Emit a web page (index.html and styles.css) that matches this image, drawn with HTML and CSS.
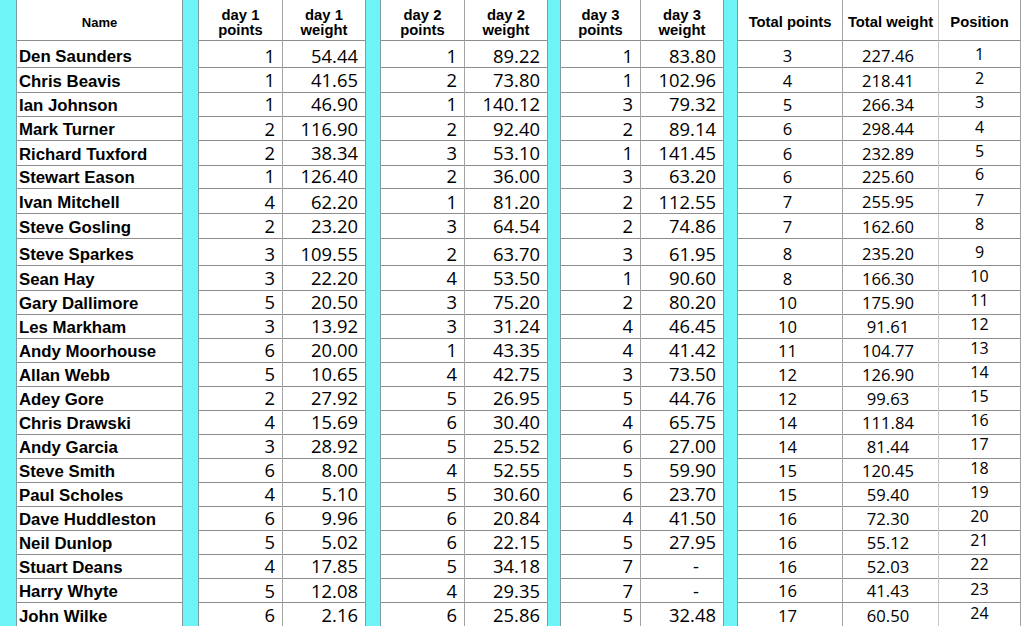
FILE: index.html
```html
<!DOCTYPE html>
<html lang="en">
<head>
<meta charset="utf-8">
<title>Results</title>
<link rel="stylesheet" href="styles.css">
</head>
<body>
<div class="sheet">
  <div class="row head">
    <div class="cy c0"></div>
    <div class="hd hname">Name</div>
    <div class="cy"></div>
    <div class="hd vr">day 1<br>points</div>
    <div class="hd">day 1<br>weight</div>
    <div class="cy"></div>
    <div class="hd vr">day 2<br>points</div>
    <div class="hd">day 2<br>weight</div>
    <div class="cy"></div>
    <div class="hd vr">day 3<br>points</div>
    <div class="hd">day 3<br>weight</div>
    <div class="cy"></div>
    <div class="hd vr">Total points</div>
    <div class="hd vr lt">Total weight</div>
    <div class="hd vr">Position</div>
  </div>

  <div class="row h27"><div class="cy c0"></div><div class="nm">Den Saunders</div><div class="cy"></div><div class="num vr">1</div><div class="num">54.44</div><div class="cy"></div><div class="num vr">1</div><div class="num">89.22</div><div class="cy"></div><div class="num vr">1</div><div class="num">83.80</div><div class="cy"></div><div class="tot vr">3</div><div class="tot vr lt">227.46</div><div class="pos vr">1</div></div>
  <div class="row"><div class="cy c0"></div><div class="nm">Chris Beavis</div><div class="cy"></div><div class="num vr">1</div><div class="num">41.65</div><div class="cy"></div><div class="num vr">2</div><div class="num">73.80</div><div class="cy"></div><div class="num vr">1</div><div class="num">102.96</div><div class="cy"></div><div class="tot vr">4</div><div class="tot vr lt">218.41</div><div class="pos vr">2</div></div>
  <div class="row"><div class="cy c0"></div><div class="nm">Ian Johnson</div><div class="cy"></div><div class="num vr">1</div><div class="num">46.90</div><div class="cy"></div><div class="num vr">1</div><div class="num">140.12</div><div class="cy"></div><div class="num vr">3</div><div class="num">79.32</div><div class="cy"></div><div class="tot vr">5</div><div class="tot vr lt">266.34</div><div class="pos vr">3</div></div>
  <div class="row h25"><div class="cy c0"></div><div class="nm">Mark Turner</div><div class="cy"></div><div class="num vr">2</div><div class="num">116.90</div><div class="cy"></div><div class="num vr">2</div><div class="num">92.40</div><div class="cy"></div><div class="num vr">2</div><div class="num">89.14</div><div class="cy"></div><div class="tot vr">6</div><div class="tot vr lt">298.44</div><div class="pos vr">4</div></div>
  <div class="row h23"><div class="cy c0"></div><div class="nm">Richard Tuxford</div><div class="cy"></div><div class="num vr">2</div><div class="num">38.34</div><div class="cy"></div><div class="num vr">3</div><div class="num">53.10</div><div class="cy"></div><div class="num vr">1</div><div class="num">141.45</div><div class="cy"></div><div class="tot vr">6</div><div class="tot vr lt">232.89</div><div class="pos vr">5</div></div>
  <div class="row"><div class="cy c0"></div><div class="nm">Stewart Eason</div><div class="cy"></div><div class="num vr">1</div><div class="num">126.40</div><div class="cy"></div><div class="num vr">2</div><div class="num">36.00</div><div class="cy"></div><div class="num vr">3</div><div class="num">63.20</div><div class="cy"></div><div class="tot vr">6</div><div class="tot vr lt">225.60</div><div class="pos vr">6</div></div>
  <div class="row h26"><div class="cy c0"></div><div class="nm">Ivan Mitchell</div><div class="cy"></div><div class="num vr">4</div><div class="num">62.20</div><div class="cy"></div><div class="num vr">1</div><div class="num">81.20</div><div class="cy"></div><div class="num vr">2</div><div class="num">112.55</div><div class="cy"></div><div class="tot vr">7</div><div class="tot vr lt">255.95</div><div class="pos vr">7</div></div>
  <div class="row"><div class="cy c0"></div><div class="nm">Steve Gosling</div><div class="cy"></div><div class="num vr">2</div><div class="num">23.20</div><div class="cy"></div><div class="num vr">3</div><div class="num">64.54</div><div class="cy"></div><div class="num vr">2</div><div class="num">74.86</div><div class="cy"></div><div class="tot vr">7</div><div class="tot vr lt">162.60</div><div class="pos vr">8</div></div>
  <div class="row h28"><div class="cy c0"></div><div class="nm">Steve Sparkes</div><div class="cy"></div><div class="num vr">3</div><div class="num">109.55</div><div class="cy"></div><div class="num vr">2</div><div class="num">63.70</div><div class="cy"></div><div class="num vr">3</div><div class="num">61.95</div><div class="cy"></div><div class="tot vr">8</div><div class="tot vr lt">235.20</div><div class="pos vr">9</div></div>
  <div class="row"><div class="cy c0"></div><div class="nm">Sean Hay</div><div class="cy"></div><div class="num vr">3</div><div class="num">22.20</div><div class="cy"></div><div class="num vr">4</div><div class="num">53.50</div><div class="cy"></div><div class="num vr">1</div><div class="num">90.60</div><div class="cy"></div><div class="tot vr">8</div><div class="tot vr lt">166.30</div><div class="pos vr">10</div></div>
  <div class="row"><div class="cy c0"></div><div class="nm">Gary Dallimore</div><div class="cy"></div><div class="num vr">5</div><div class="num">20.50</div><div class="cy"></div><div class="num vr">3</div><div class="num">75.20</div><div class="cy"></div><div class="num vr">2</div><div class="num">80.20</div><div class="cy"></div><div class="tot vr">10</div><div class="tot vr lt">175.90</div><div class="pos vr">11</div></div>
  <div class="row"><div class="cy c0"></div><div class="nm">Les Markham</div><div class="cy"></div><div class="num vr">3</div><div class="num">13.92</div><div class="cy"></div><div class="num vr">3</div><div class="num">31.24</div><div class="cy"></div><div class="num vr">4</div><div class="num">46.45</div><div class="cy"></div><div class="tot vr">10</div><div class="tot vr lt">91.61</div><div class="pos vr">12</div></div>
  <div class="row"><div class="cy c0"></div><div class="nm">Andy Moorhouse</div><div class="cy"></div><div class="num vr">6</div><div class="num">20.00</div><div class="cy"></div><div class="num vr">1</div><div class="num">43.35</div><div class="cy"></div><div class="num vr">4</div><div class="num">41.42</div><div class="cy"></div><div class="tot vr">11</div><div class="tot vr lt">104.77</div><div class="pos vr">13</div></div>
  <div class="row"><div class="cy c0"></div><div class="nm">Allan Webb</div><div class="cy"></div><div class="num vr">5</div><div class="num">10.65</div><div class="cy"></div><div class="num vr">4</div><div class="num">42.75</div><div class="cy"></div><div class="num vr">3</div><div class="num">73.50</div><div class="cy"></div><div class="tot vr">12</div><div class="tot vr lt">126.90</div><div class="pos vr">14</div></div>
  <div class="row"><div class="cy c0"></div><div class="nm">Adey Gore</div><div class="cy"></div><div class="num vr">2</div><div class="num">27.92</div><div class="cy"></div><div class="num vr">5</div><div class="num">26.95</div><div class="cy"></div><div class="num vr">5</div><div class="num">44.76</div><div class="cy"></div><div class="tot vr">12</div><div class="tot vr lt">99.63</div><div class="pos vr">15</div></div>
  <div class="row"><div class="cy c0"></div><div class="nm">Chris Drawski</div><div class="cy"></div><div class="num vr">4</div><div class="num">15.69</div><div class="cy"></div><div class="num vr">6</div><div class="num">30.40</div><div class="cy"></div><div class="num vr">4</div><div class="num">65.75</div><div class="cy"></div><div class="tot vr">14</div><div class="tot vr lt">111.84</div><div class="pos vr">16</div></div>
  <div class="row"><div class="cy c0"></div><div class="nm">Andy Garcia</div><div class="cy"></div><div class="num vr">3</div><div class="num">28.92</div><div class="cy"></div><div class="num vr">5</div><div class="num">25.52</div><div class="cy"></div><div class="num vr">6</div><div class="num">27.00</div><div class="cy"></div><div class="tot vr">14</div><div class="tot vr lt">81.44</div><div class="pos vr">17</div></div>
  <div class="row"><div class="cy c0"></div><div class="nm">Steve Smith</div><div class="cy"></div><div class="num vr">6</div><div class="num">8.00</div><div class="cy"></div><div class="num vr">4</div><div class="num">52.55</div><div class="cy"></div><div class="num vr">5</div><div class="num">59.90</div><div class="cy"></div><div class="tot vr">15</div><div class="tot vr lt">120.45</div><div class="pos vr">18</div></div>
  <div class="row"><div class="cy c0"></div><div class="nm">Paul Scholes</div><div class="cy"></div><div class="num vr">4</div><div class="num">5.10</div><div class="cy"></div><div class="num vr">5</div><div class="num">30.60</div><div class="cy"></div><div class="num vr">6</div><div class="num">23.70</div><div class="cy"></div><div class="tot vr">15</div><div class="tot vr lt">59.40</div><div class="pos vr">19</div></div>
  <div class="row"><div class="cy c0"></div><div class="nm">Dave Huddleston</div><div class="cy"></div><div class="num vr">6</div><div class="num">9.96</div><div class="cy"></div><div class="num vr">6</div><div class="num">20.84</div><div class="cy"></div><div class="num vr">4</div><div class="num">41.50</div><div class="cy"></div><div class="tot vr">16</div><div class="tot vr lt">72.30</div><div class="pos vr">20</div></div>
  <div class="row"><div class="cy c0"></div><div class="nm">Neil Dunlop</div><div class="cy"></div><div class="num vr">5</div><div class="num">5.02</div><div class="cy"></div><div class="num vr">6</div><div class="num">22.15</div><div class="cy"></div><div class="num vr">5</div><div class="num">27.95</div><div class="cy"></div><div class="tot vr">16</div><div class="tot vr lt">55.12</div><div class="pos vr">21</div></div>
  <div class="row"><div class="cy c0"></div><div class="nm">Stuart Deans</div><div class="cy"></div><div class="num vr">4</div><div class="num">17.85</div><div class="cy"></div><div class="num vr">5</div><div class="num">34.18</div><div class="cy"></div><div class="num vr">7</div><div class="num dash">-</div><div class="cy"></div><div class="tot vr">16</div><div class="tot vr lt">52.03</div><div class="pos vr">22</div></div>
  <div class="row h25"><div class="cy c0"></div><div class="nm">Harry Whyte</div><div class="cy"></div><div class="num vr">5</div><div class="num">12.08</div><div class="cy"></div><div class="num vr">4</div><div class="num">29.35</div><div class="cy"></div><div class="num vr">7</div><div class="num dash">-</div><div class="cy"></div><div class="tot vr">16</div><div class="tot vr lt">41.43</div><div class="pos vr">23</div></div>
  <div class="row"><div class="cy c0"></div><div class="nm">John Wilke</div><div class="cy"></div><div class="num vr">6</div><div class="num">2.16</div><div class="cy"></div><div class="num vr">6</div><div class="num">25.86</div><div class="cy"></div><div class="num vr">5</div><div class="num">32.48</div><div class="cy"></div><div class="tot vr">17</div><div class="tot vr lt">60.50</div><div class="pos vr">24</div></div>
</div>
</body>
</html>
```

FILE: styles.css
```css
* {
  box-sizing: border-box;
}

html, body {
  margin: 0;
  padding: 0;
  background: #ffffff;
}

body {
  width: 1024px;
  height: 626px;
  overflow: hidden;
  color: #000000;
  font-family: "Liberation Sans", Arial, sans-serif;
}

.sheet {
  display: flex;
  flex-direction: column;
  width: 1021px;
}

.row {
  display: grid;
  grid-template-columns: 17px 165px 17px 84px 82px 16px 84px 82px 14px 80px 82px 15px 105px 96px 82px;
  height: 24px;
}

.row.head { height: 41px; }
.row.h23 { height: 23px; }
.row.h25 { height: 25px; }
.row.h26 { height: 26px; }
.row.h27 { height: 27px; }
.row.h28 { height: 28px; }

/* cyan separator strips */
.cy {
  background: #6ef3f6;
  border-left: 1px solid #7f9c9e;
  border-right: 1px solid #7f9c9e;
}

.cy.c0 {
  border-left: none;
}

/* header cells */
.hd {
  display: flex;
  align-items: center;
  justify-content: center;
  padding-top: 6px;
  text-align: center;
  font-weight: bold;
  font-size: 14.8px;
  line-height: 15.5px;
  border-bottom: 1px solid #8d8d8d;
  white-space: nowrap;
}

.hd.hname {
  font-size: 13px;
}

/* body cells */
.nm,
.num,
.tot,
.pos {
  display: flex;
  align-items: flex-end;
  border-bottom: 1px solid #8d8d8d;
  white-space: nowrap;
}

.nm {
  padding-left: 2px;
  font-weight: bold;
  font-size: 16.8px;
  line-height: 20px;
}

.num {
  justify-content: flex-end;
  padding-right: 7px;
  padding-bottom: 1.5px;
  font-family: "Open Sans", "Liberation Sans", sans-serif;
  font-size: 18.4px;
  line-height: 20px;
}

.num.dash {
  padding-right: 24px;
}

.tot,
.pos {
  justify-content: center;
  padding-bottom: 1px;
  font-family: "Open Sans", "Liberation Sans", sans-serif;
  font-size: 16.6px;
  line-height: 20px;
}

.tot {
  padding-right: 5px;
}

.pos {
  padding-bottom: 3.5px;
  font-size: 16px;
}

.vr {
  border-right: 1px solid #a4a4a4;
}

.vr.lt {
  border-right-color: #c6c6c6;
}
```
